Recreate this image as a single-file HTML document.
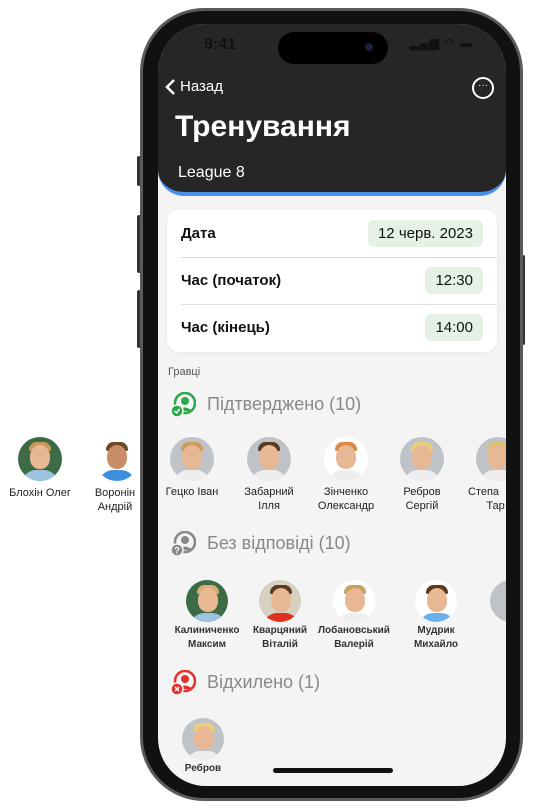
<!DOCTYPE html>
<html><head><meta charset="utf-8"><style>
*{margin:0;padding:0;box-sizing:border-box}
body{width:536px;height:811px;background:#fff;position:relative;overflow:hidden;font-family:"Liberation Sans",sans-serif}
.abs{position:absolute}
.frame{left:140px;top:8px;width:383px;height:793px;border-radius:64px;background:#111;border:3px solid #5a5a5a}
.btn{position:absolute;width:4px;background:#333;border-radius:2px}
.screen{left:158px;top:24px;width:348px;height:762px;border-radius:48px;background:#f4f4f4;overflow:hidden}
.hdr{left:0;top:0;width:348px;height:172px;background:#262626;border-radius:0 0 26px 26px;border-bottom:4px solid #4a90e8}
.w{color:#fff}
.card{left:9px;top:186px;width:330px;height:142px;background:#fff;border-radius:12px;box-shadow:0 1px 4px rgba(0,0,0,.06)}
.row{position:absolute;left:14px;right:14px;height:47px;display:flex;align-items:center;justify-content:space-between;font-weight:bold;font-size:15px;color:#111}
.pill{background:#e4f1e4;border-radius:6px;padding:5px 10px;font-weight:normal;font-size:15px}
.ln{position:absolute;left:14px;right:0;height:1px;background:#ddd}
.av{position:absolute;width:44px;height:44px;border-radius:50%;overflow:hidden;background:#bfc3c8}
.av i{position:absolute;left:12px;top:8px;width:20px;height:24px;border-radius:50% 50% 45% 45%;background:#e8b894}
.av b{position:absolute;left:11px;top:5px;width:22px;height:9px;border-radius:10px 10px 2px 2px;background:#c99a5a}
.av u{position:absolute;left:4px;top:33px;width:36px;height:20px;border-radius:14px 14px 0 0;background:#eee}
.nm{position:absolute;width:80px;text-align:center;font-size:11px;line-height:14px;color:#222}
.sec{position:absolute;font-size:18px;color:#888}
</style></head><body>
<div class="av" style="left:18px;top:437px;background:#3d6b45"><b></b><i></i><u style="background:#9cc3e0"></u></div>
<div class="nm" style="left:0;top:486px">Блохін Олег</div>
<div class="av" style="left:95px;top:437px;background:#fff"><b style="background:#6b4a2a"></b><i style="background:#c98e68"></i><u style="background:#3c8fdc"></u></div>
<div class="nm" style="left:75px;top:486px">Воронін<br>Андрій</div>

<div class="btn" style="left:137px;top:156px;height:30px"></div>
<div class="btn" style="left:137px;top:215px;height:58px"></div>
<div class="btn" style="left:137px;top:290px;height:58px"></div>
<div class="btn" style="left:521px;top:255px;height:90px"></div>
<div class="abs frame"></div>
<div class="abs screen">
 <div class="abs hdr">
  <div class="abs" style="left:46px;top:12px;font-size:16px;font-weight:bold;color:#111">9:41</div>
  <div class="abs" style="left:120px;top:8px;width:110px;height:32px;border-radius:16px;background:#000"></div>
  <div class="abs" style="left:207px;top:19px;width:8px;height:8px;border-radius:50%;background:#1a2040"></div>
  <div class="abs" style="left:252px;top:12px;font-size:12px;font-weight:bold;letter-spacing:1px;color:#111">▂▄▆ ◠ ▬</div>
  <svg class="abs" style="left:6px;top:54px" width="14" height="18"><path d="M10 2 L3 9 L10 16" stroke="#fff" stroke-width="2.5" fill="none"/></svg>
  <div class="abs w" style="left:22px;top:54px;font-size:15px">Назад</div>
  <div class="abs" style="left:314px;top:53px;width:22px;height:22px;border:2px solid #fff;border-radius:50%;color:#fff;font-size:10px;text-align:center;line-height:14px">···</div>
  <div class="abs w" style="left:17px;top:86px;font-size:30px;font-weight:bold">Тренування</div>
  <div class="abs w" style="left:20px;top:140px;font-size:16px">League 8</div>
 </div>
 <div class="abs card">
  <div class="row" style="top:0"><span>Дата</span><span class="pill">12 черв. 2023</span></div>
  <div class="ln" style="top:47px"></div>
  <div class="row" style="top:47px"><span>Час (початок)</span><span class="pill">12:30</span></div>
  <div class="ln" style="top:94px"></div>
  <div class="row" style="top:94px"><span>Час (кінець)</span><span class="pill">14:00</span></div>
 </div>
 <div class="abs" style="left:10px;top:342px;font-size:11px;color:#555">Гравці</div>
 <svg class="abs" style="left:12px;top:368px" width="26" height="26"><circle cx="15" cy="11" r="10" fill="none" stroke="#2aa84a" stroke-width="2.5"/><circle cx="15" cy="9" r="4" fill="#2aa84a"/><path d="M8 19 Q15 12 22 19" fill="#2aa84a"/><circle cx="7" cy="19" r="6" fill="#2aa84a" stroke="#f4f4f4" stroke-width="1.5"/><path d="M4.5 19 L6.5 21 L9.5 17" stroke="#fff" stroke-width="1.5" fill="none"/></svg>
 <div class="sec" style="left:49px;top:370px">Підтверджено (10)</div>
 <svg class="abs" style="left:12px;top:507px" width="26" height="26"><circle cx="15" cy="11" r="10" fill="none" stroke="#888" stroke-width="2.5"/><circle cx="15" cy="9" r="4" fill="#888"/><path d="M8 19 Q15 12 22 19" fill="#888"/><circle cx="7" cy="19" r="6" fill="#888" stroke="#f4f4f4" stroke-width="1.5"/><text x="7" y="22.5" font-size="9" fill="#fff" text-anchor="middle" font-family="Liberation Sans" font-weight="bold">?</text></svg>
 <div class="sec" style="left:49px;top:509px">Без відповіді (10)</div>
 <svg class="abs" style="left:12px;top:646px" width="26" height="26"><circle cx="15" cy="11" r="10" fill="none" stroke="#e53030" stroke-width="2.5"/><circle cx="15" cy="9" r="4" fill="#e53030"/><path d="M8 19 Q15 12 22 19" fill="#e53030"/><circle cx="7" cy="19" r="6" fill="#e53030" stroke="#f4f4f4" stroke-width="1.5"/><path d="M5 17 L9 21 M9 17 L5 21" stroke="#fff" stroke-width="1.5"/></svg>
 <div class="sec" style="left:49px;top:648px">Відхилено (1)</div>

 <div class="av" style="left:12px;top:413px"><b></b><i></i><u></u></div>
 <div class="nm" style="left:-6px;top:461px">Гецко Іван</div>
 <div class="av" style="left:89px;top:413px"><b style="background:#5a3a20"></b><i></i><u></u></div>
 <div class="nm" style="left:71px;top:461px">Забарний<br>Ілля</div>
 <div class="av" style="left:166px;top:413px;background:#fff"><b style="background:#d98a40"></b><i></i><u></u></div>
 <div class="nm" style="left:148px;top:461px">Зінченко<br>Олександр</div>
 <div class="av" style="left:242px;top:413px"><b style="background:#e8cf7a"></b><i></i><u></u></div>
 <div class="nm" style="left:224px;top:461px">Ребров<br>Сергій</div>
 <div class="av" style="left:318px;top:413px"><b style="background:#e0c070"></b><i></i><u></u></div>
 <div class="nm" style="left:300px;top:461px;text-align:left;padding-left:10px">Степа<br>&nbsp;&nbsp;&nbsp;&nbsp;&nbsp;&nbsp;Тар</div>

 <div class="av" style="left:28px;top:556px;width:42px;height:42px;background:#3d6b45"><b style="background:#d8b070"></b><i></i><u style="background:#9cc3e0"></u></div>
 <div class="nm" style="left:9px;top:600px;font-size:10px;font-weight:bold;color:#333">Калиниченко<br>Максим</div>
 <div class="av" style="left:101px;top:556px;width:42px;height:42px;background:#d8d0c0"><b style="background:#5a3a20"></b><i></i><u style="background:#e03020"></u></div>
 <div class="nm" style="left:82px;top:600px;font-size:10px;font-weight:bold;color:#333">Кварцяний<br>Віталій</div>
 <div class="av" style="left:175px;top:556px;width:42px;height:42px;background:#fff"><b style="background:#c9a060"></b><i></i><u></u></div>
 <div class="nm" style="left:156px;top:600px;font-size:10px;font-weight:bold;color:#333">Лобановський<br>Валерій</div>
 <div class="av" style="left:257px;top:556px;width:42px;height:42px;background:#fff"><b style="background:#5a3a20"></b><i></i><u style="background:#6ab0e8"></u></div>
 <div class="nm" style="left:238px;top:600px;font-size:10px;font-weight:bold;color:#333">Мудрик<br>Михайло</div>
 <div class="av" style="left:332px;top:556px;width:42px;height:42px"></div>

 <div class="av" style="left:24px;top:694px;width:42px;height:42px"><b style="background:#e8cf7a"></b><i></i><u></u></div>
 <div class="nm" style="left:5px;top:738px;font-size:10px;font-weight:bold;color:#333">Ребров</div>
 <div class="abs" style="left:115px;top:744px;width:120px;height:5px;border-radius:3px;background:#111"></div>
</div>
</body></html>
